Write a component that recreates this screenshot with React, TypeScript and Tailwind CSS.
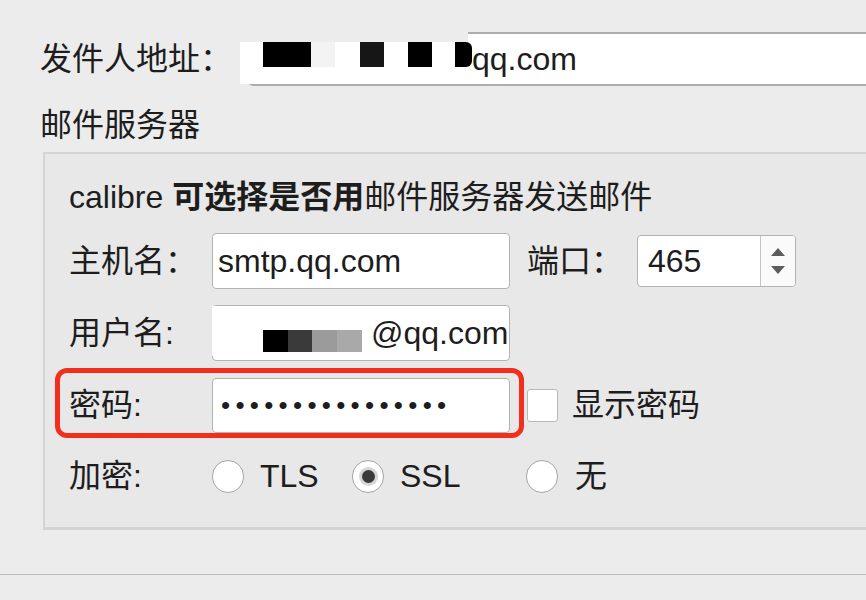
import React from "react";

function Radio({ checked = false }: { checked?: boolean }) {
  return (
    <div className="w-[32px] h-[33px] shrink-0 rounded-full bg-white border-[1.5px] border-[#a5a5a5] flex items-center justify-center">
      {checked && (
        <div className="w-[13px] h-[13px] rounded-full bg-[#3a3a3a] ring-[3px] ring-[#d6d6d6]" />
      )}
    </div>
  );
}

export default function App() {
  return (
    <div className="w-[866px] h-[600px] overflow-hidden bg-[#ececec] text-[#1d1d1d] text-[32px] leading-[36px] pt-[32px] font-['Liberation_Sans','Noto_Sans_CJK_SC',sans-serif]">
      {/* sender address row */}
      <div className="relative flex items-center h-[54px]">
        <div className="w-[248px] pl-[40px] shrink-0">发件人地址：</div>
        <div className="h-[54px] w-[640px] shrink-0 bg-white border-2 border-[#adadad] rounded-[5px] flex items-center pl-[222px]">
          qq.com
        </div>
        {/* redaction overlay */}
        <div className="absolute left-[240px] top-0 w-[228px] h-[10px] bg-[#ececec]" />
        <div className="absolute left-[240px] top-[10px] w-[230px] h-[42px] bg-white" />
        <div className="absolute left-[263px] top-[10px] h-[25px] flex">
          <div className="w-[48px] h-full bg-black" />
          <div className="w-[24px] h-full bg-[#f3f3f3]" />
          <div className="w-[25px] h-full bg-white" />
          <div className="w-[24px] h-full bg-[#161616]" />
          <div className="w-[24px] h-full bg-white" />
          <div className="w-[24px] h-full bg-black" />
          <div className="w-[23px] h-full bg-white" />
          <div className="w-[17px] h-full bg-black rounded-r-[6px]" />
        </div>
      </div>

      <div className="mt-[21px] pl-[40px]">邮件服务器</div>

      {/* group box */}
      <div className="mt-[9px] ml-[43px] w-[840px] h-[378px] bg-[#e8e8e8] border-t-2 border-l-2 border-b-[3px] border-[#d4d4d4] pl-[24px] pt-[25px]">
        <div>
          calibre <span className="font-bold">可选择是否用</span>邮件服务器发送邮件
        </div>

        {/* host row */}
        <div className="mt-[18px] flex items-center h-[56px]">
          <div className="w-[143px] shrink-0">主机名：</div>
          <div className="w-[298px] h-[56px] shrink-0 bg-white border border-[#b3b3b3] rounded-[4px] flex items-center pl-[5px]">
            smtp.qq.com
          </div>
          <div className="ml-[17px] w-[110px] shrink-0">端口：</div>
          <div className="w-[159px] h-[52px] shrink-0 bg-white border border-[#b3b3b3] rounded-[4px] flex overflow-hidden">
            <div className="flex-1 flex items-center pl-[10px]">465</div>
            <div className="w-[35px] border-l border-[#c4c4c4] bg-[#fafafa] flex flex-col items-center justify-center gap-[10px]">
              <svg width="14" height="8" viewBox="0 0 14 8">
                <path d="M7 0 L14 8 L0 8 Z" fill="#5c5c5c" />
              </svg>
              <svg width="14" height="8" viewBox="0 0 14 8">
                <path d="M0 0 L14 0 L7 8 Z" fill="#5c5c5c" />
              </svg>
            </div>
          </div>
        </div>

        {/* user row */}
        <div className="relative mt-[16px] flex items-center h-[56px]">
          <div className="w-[143px] shrink-0">用户名:</div>
          <div className="w-[298px] h-[56px] shrink-0 bg-white border border-[#b3b3b3] rounded-[4px] flex items-center pl-[158px]">
            @qq.com
          </div>
          <div className="absolute left-[143px] top-[1px] w-[152px] h-[50px] bg-white [clip-path:polygon(0_0,90%_0,100%_100%,0_100%)]" />
          <div className="absolute left-[194px] top-[25px] h-[22px] flex">
            <div className="w-[25px] h-full bg-black" />
            <div className="w-[24px] h-full bg-[#3a3a3a]" />
            <div className="w-[25px] h-full bg-[#9b9b9b]" />
            <div className="w-[25px] h-full bg-[#a9a9a9]" />
          </div>
        </div>

        {/* password row */}
        <div className="relative mt-[16px] flex items-center h-[56px]">
          <div className="w-[143px] shrink-0">密码:</div>
          <div className="w-[298px] h-[55px] shrink-0 bg-white border border-[#b3b3b3] rounded-[4px] flex items-center pl-[8px]">
            <span className="text-[26px] tracking-[5.3px]">••••••••••••••••</span>
          </div>
          <div className="ml-[17px] w-[31px] h-[33px] shrink-0 bg-white border border-[#b8b8b8] rounded-[3px]" />
          <div className="ml-[14px]">显示密码</div>
          <div className="absolute left-[-14px] top-[-9px] w-[469px] h-[70px] border-[5px] border-[#f42e1c] rounded-[12px] pointer-events-none" />
        </div>

        {/* encryption row */}
        <div className="mt-[20px] flex items-center h-[46px]">
          <div className="w-[143px] shrink-0">加密:</div>
          <div className="w-[140px] shrink-0 flex items-center">
            <Radio />
            <span className="ml-[16px]">TLS</span>
          </div>
          <div className="w-[174px] shrink-0 flex items-center">
            <Radio checked />
            <span className="ml-[16px]">SSL</span>
          </div>
          <div className="flex items-center">
            <Radio />
            <span className="ml-[17px]">无</span>
          </div>
        </div>
      </div>

      <div className="mt-[44px] h-px bg-[#bbbbbb]" />
    </div>
  );
}
